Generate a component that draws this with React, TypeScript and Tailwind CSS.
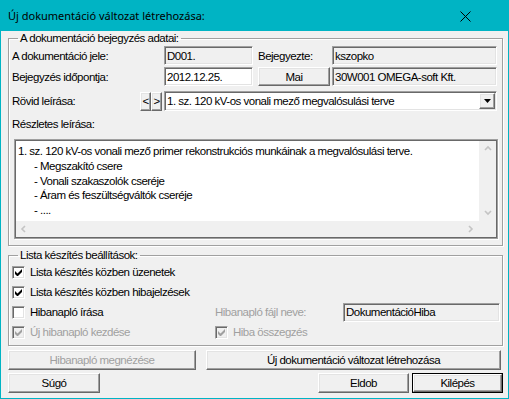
import React from 'react';

const sunken =
  'border border-t-[#a0a0a0] border-l-[#a0a0a0] border-r-white border-b-white shadow-[inset_1px_1px_0_#696969,inset_-1px_-1px_0_#e3e3e3]';
const raised =
  'border border-t-white border-l-white border-r-[#696969] border-b-[#696969] shadow-[inset_-1px_-1px_0_#a0a0a0,inset_1px_1px_0_#e3e3e3]';
const groupBox = 'border border-[#a0a0a0] shadow-[inset_1px_1px_0_#fff,1px_1px_0_#fff]';

const Field = ({ value, w, white }: { value: string; w: string; white?: boolean }) => (
  <div className={`${sunken} ${w} h-[19px] flex items-center pl-[2px] ${white ? 'bg-white' : 'bg-[#f0f0f0]'}`}>
    {value}
  </div>
);

const Btn = ({
  label,
  w,
  h = 'h-[20px]',
  disabled,
  isDefault,
}: {
  label: React.ReactNode;
  w: string;
  h?: string;
  disabled?: boolean;
  isDefault?: boolean;
}) => {
  const inner = (
    <div className={`${raised} w-full h-full flex items-center justify-center ${disabled ? 'text-[#a0a0a0]' : ''}`}>
      {label}
    </div>
  );
  if (isDefault) {
    return <div className={`${w} ${h} border border-black bg-[#f0f0f0]`}>{inner}</div>;
  }
  return <div className={`${w} ${h} bg-[#f0f0f0]`}>{inner}</div>;
};

const Check = ({ label, checked, disabled }: { label: string; checked?: boolean; disabled?: boolean }) => (
  <div className={`flex items-center gap-[5px] ${disabled ? 'text-[#a0a0a0]' : ''}`}>
    <div className={`${sunken} w-[13px] h-[13px] flex items-center justify-center ${disabled ? 'bg-[#f0f0f0]' : 'bg-white'}`}>
      {checked && (
        <svg width="7" height="7" viewBox="0 0 7 7">
          <path d="M0 2v3l2 2h1l4-4V0L2.5 4.5z" fill={disabled ? '#a0a0a0' : '#000'} />
        </svg>
      )}
    </div>
    <span>{label}</span>
  </div>
);

const Chevron = ({ dir }: { dir: 'up' | 'down' | 'left' | 'right' }) => {
  const paths: Record<string, string> = {
    up: 'M1 5l3-3 3 3',
    down: 'M1 2l3 3 3-3',
    left: 'M5 1L2 4l3 3',
    right: 'M2 1l3 3-3 3',
  };
  return (
    <svg width="8" height="8" viewBox="0 0 8 8">
      <path d={paths[dir]} fill="none" stroke="#c4c4c4" strokeWidth="1.6" />
    </svg>
  );
};

export default function App() {
  return (
    <div className="w-[509px] h-[399px] border border-[#00b4c4] bg-[#f0f0f0] flex flex-col text-[11.5px] tracking-[-0.5px] leading-[14px] text-black font-['Liberation_Sans',Arial,sans-serif]">
      {/* title bar */}
      <div className="h-[30px] bg-[#00b4c4] flex items-center justify-between pl-[7px] pr-[37px] shrink-0">
        <span className="text-[11px] tracking-normal font-['Noto_Sans',sans-serif]">Új dokumentáció változat létrehozása:</span>
        <svg width="11" height="11" viewBox="0 0 11 11">
          <path d="M0.5 0.5l10 10M10.5 0.5l-10 10" stroke="#000" strokeWidth="1" />
        </svg>
      </div>

      <div className="flex-1 pl-[7px] pr-[5px]">
        {/* group 1 */}
        <fieldset className={`${groupBox} pl-[3px] pt-[1px] pb-[6px]`}>
          <legend className="ml-[6px] px-[2px] leading-[14px]">A dokumentáció bejegyzés adatai:</legend>

          <div className="flex items-center h-[19px]">
            <span className="w-[152px]">A dokumentáció jele:</span>
            <Field value="D001." w="w-[89px]" />
            <span className="ml-[5px] w-[74px]">Bejegyezte:</span>
            <Field value="kszopko" w="w-[165px]" />
          </div>

          <div className="flex items-center h-[19px] mt-[2px]">
            <span className="w-[152px]">Bejegyzés időpontja:</span>
            <Field value="2012.12.25." w="w-[89px]" white />
            <div className="ml-[5px]">
              <Btn label="Mai" w="w-[72px]" h="h-[19px]" />
            </div>
            <div className="ml-[2px]">
              <Field value="30W001 OMEGA-soft Kft." w="w-[165px]" />
            </div>
          </div>

          <div className="flex items-center h-[20px] mt-[5px]">
            <span className="w-[128px]">Rövid leírása:</span>
            <Btn label="<" w="w-[11px]" h="h-[19px]" />
            <Btn label=">" w="w-[11px]" h="h-[19px]" />
            <div className={`${sunken} ml-[2px] w-[333px] h-[20px] bg-white flex items-center justify-between pl-[2px] pr-[1px]`}>
              <span>1. sz. 120 kV-os vonali mező megvalósulási terve</span>
              <div className={`${raised} w-[16px] h-[16px] bg-[#f0f0f0] flex items-center justify-center`}>
                <svg width="7" height="4" viewBox="0 0 7 4">
                  <path d="M0 0h7L3.5 4z" fill="#000" />
                </svg>
              </div>
            </div>
          </div>

          <div className="mt-[6px] h-[14px]">Részletes leírása:</div>

          <div className="mt-[8px] ml-[2px] w-[484px] h-[100px] border border-[#a0a0a0] shadow-[inset_1px_1px_0_#696969,inset_-1px_-1px_0_#696969,1px_1px_0_#fff] flex flex-col bg-white p-[1px]">
            <div className="flex flex-1">
              <div className="flex-1 pl-[2px] pt-[3px] leading-[14.75px]">
                <div>1. sz. 120 kV-os vonali mező primer rekonstrukciós munkáinak a megvalósulási terve.</div>
                <div className="pl-[16px]">- Megszakító csere</div>
                <div className="pl-[16px]">- Vonali szakaszolók cseréje</div>
                <div className="pl-[16px]">- Áram és feszültségváltók cseréje</div>
                <div className="pl-[16px]">- ....</div>
              </div>
              <div className="w-[17px] bg-[#f0f0f0] flex flex-col items-center justify-between py-[4px]">
                <Chevron dir="up" />
                <Chevron dir="down" />
              </div>
            </div>
            <div className="h-[16px] flex">
              <div className="flex-1 bg-[#f0f0f0] flex items-center justify-between px-[4px]">
                <Chevron dir="left" />
                <Chevron dir="right" />
              </div>
              <div className="w-[17px] bg-[#f0f0f0]" />
            </div>
          </div>
        </fieldset>

        {/* group 2 */}
        <fieldset className={`${groupBox} mt-[2px] pl-[3px] pb-[3px]`}>
          <legend className="ml-[6px] px-[2px] leading-[14px]">Lista készítés beállítások:</legend>
          <div className="h-[20px] flex items-center">
            <Check label="Lista készítés közben üzenetek" checked />
          </div>
          <div className="h-[20px] flex items-center">
            <Check label="Lista készítés közben hibajelzések" checked />
          </div>
          <div className="h-[20px] flex items-center">
            <div className="w-[203px]">
              <Check label="Hibanapló írása" />
            </div>
            <span className="w-[128px] text-[#a0a0a0]">Hibanapló fájl neve:</span>
            <Field value="DokumentációHiba" w="w-[157px]" />
          </div>
          <div className="h-[20px] flex items-center">
            <div className="w-[203px]">
              <Check label="Új hibanapló kezdése" checked disabled />
            </div>
            <Check label="Hiba összegzés" checked disabled />
          </div>
        </fieldset>

        <div className="flex mt-[4px] gap-[10px]">
          <Btn label="Hibanapló megnézése" w="w-[188px]" disabled />
          <Btn label="Új dokumentáció változat létrehozása" w="w-[295px]" />
        </div>
        <div className="flex mt-[3px] items-center">
          <Btn label="Súgó" w="w-[92px]" />
          <div className="flex-1" />
          <Btn label="Eldob" w="w-[91px]" />
          <div className="ml-[3px]">
            <Btn label="Kilépés" w="w-[91px]" isDefault />
          </div>
        </div>
      </div>
    </div>
  );
}
